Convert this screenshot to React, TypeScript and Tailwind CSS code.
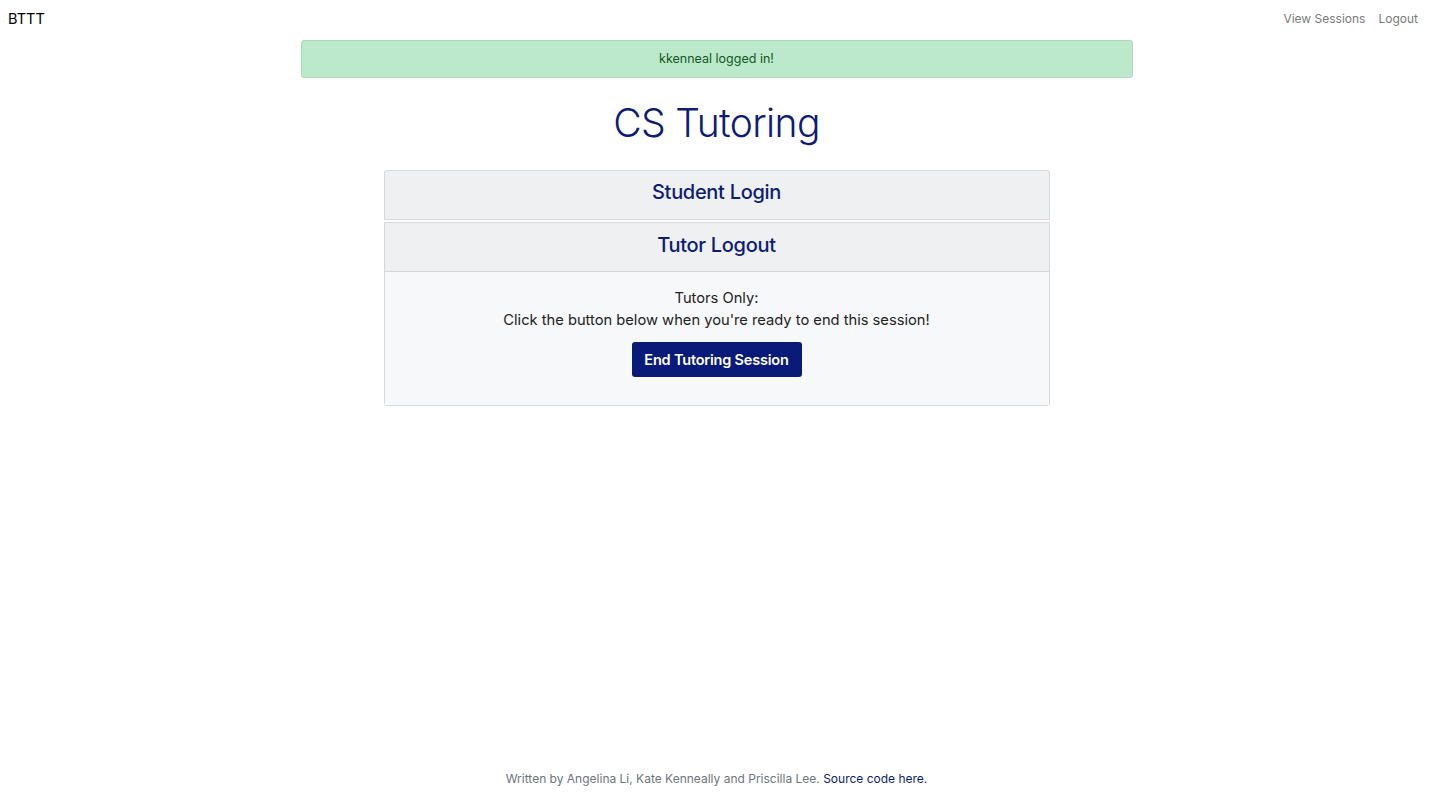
export default function App() {
  return (
    <div className="min-h-[800px] flex flex-col bg-white text-[#212529]" style={{ fontFamily: "Inter, 'Liberation Sans', sans-serif" }}>
      <nav className="h-[38px] flex items-center justify-between px-2">
        <span className="text-[14.5px] text-black">BTTT</span>
        <div className="flex gap-[13px] pr-[7px] text-[12px] text-[#7a7a7a]">
          <a>View Sessions</a>
          <a>Logout</a>
        </div>
      </nav>

      <main className="flex-1 flex flex-col items-center">
        <div className="mt-[2px] w-[832px] h-[38px] flex items-center justify-center rounded-[3px] border border-[#a9dbb8] bg-[#bce9cb] text-[12.5px] text-[#155724]">
          kkenneal logged in!
        </div>

        <h1 className="mt-[18px] text-[39px] font-light leading-[54px] text-[#0c1c78] tracking-[-0.6px]">CS Tutoring</h1>

        <div className="mt-[20px] w-[666px] flex flex-col gap-[2px]">
          <div className="h-[50px] flex items-center justify-center pb-[6px] rounded-t-[3px] border border-[#d6d7da] bg-[#eff0f2]">
            <h2 className="text-[20px] font-medium text-[#0c1c78] tracking-[-0.3px]">Student Login</h2>
          </div>
          <div className="rounded-b-[3px] border border-[#d6d7da]">
            <div className="h-[49px] flex items-center justify-center pb-[5px] border-b border-[#d6d7da] bg-[#eff0f2]">
              <h2 className="text-[20px] font-medium text-[#0c1c78] tracking-[-0.3px]">Tutor Logout</h2>
            </div>
            <div className="h-[133px] flex flex-col items-center bg-[#f7f8fa] pt-[15px] text-[14.7px] leading-[22px] text-[#222]">
              <p>Tutors Only:</p>
              <p>Click the button below when you're ready to end this session!</p>
              <button className="mt-[11px] w-[170px] h-[35px] rounded-[3px] bg-[#0a1a78] text-[14.5px] font-semibold text-white tracking-[-0.2px]">
                End Tutoring Session
              </button>
            </div>
          </div>
        </div>
      </main>

      <footer className="h-[44px] flex justify-center pt-[15px] text-[12px] leading-[16px] text-[#6c757d]">
        <p>
          Written by Angelina Li, Kate Kenneally and Priscilla Lee. <a className="text-[#0c1c78]">Source code here.</a>
        </p>
      </footer>
    </div>
  );
}
